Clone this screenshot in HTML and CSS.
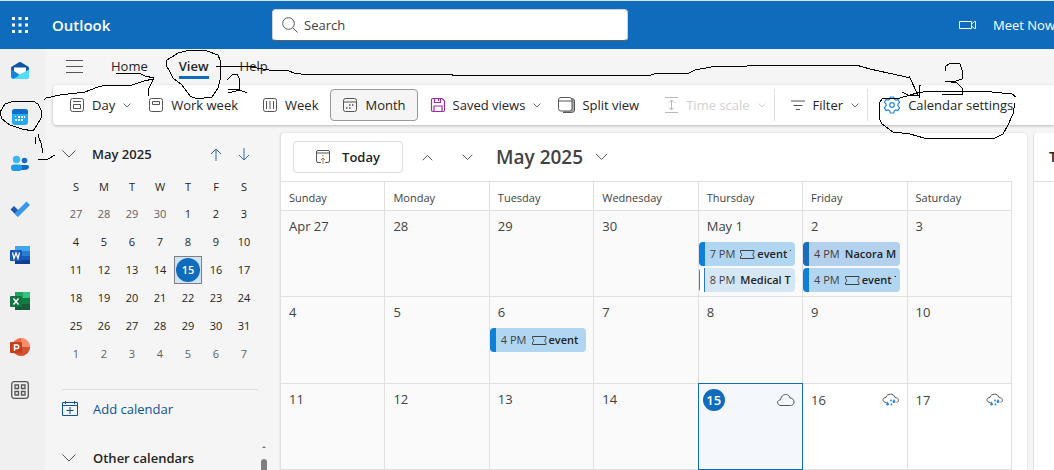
FILE: index.html
```html
<!DOCTYPE html>
<html lang="en">
<head>
<meta charset="utf-8">
<title>Outlook Calendar</title>
<link rel="stylesheet" href="styles.css">
</head>
<body>
<svg class="sprite" aria-hidden="true">
  <symbol id="chev" viewBox="0 0 8 5"><path vector-effect="non-scaling-stroke" d="M.5.5 4 4 7.500.5"/></symbol>
  <symbol id="chev-up" viewBox="0 0 8 5"><path vector-effect="non-scaling-stroke" d="M.5 4.500 4 1 7.500 4.500"/></symbol>
  <symbol id="ticket" viewBox="0 0 15 11"><path d="M.5 1.500h13.500v2c-1.500.5-1.500 3.500 0 4v2H.5v-2c1.500-.5 1.500-3.500 0-4z"/></symbol>
  <symbol id="rain" viewBox="0 0 18 14"><path d="M4.500 9.500C0 9.500 0 4.500 4 4.500 5 0 12 0 13 4.500c4 0 4.500 4 1.500 5"/><path class="drop" d="M5.500 8.500 4 11a1.500 1.500 0 1 0 3 0zM12 6l-1.500 2.500a1.500 1.500 0 1 0 3 0zM9 6 8 7.500a1 1 0 1 0 2 0zM9.500 10l-1 1.500a1 1 0 1 0 2 0z"/></symbol>
</svg>

<header class="topbar">
  <button class="waffle" aria-label="App launcher">
    <svg width="16" height="16" viewBox="0 0 16 16" fill="#fff"><path d="M0 0h3v3H0zM6.500 0h3v3h-3zM13 0h3v3h-3zM0 6.500h3v3H0zM6.500 6.500h3v3h-3zM13 6.500h3v3h-3zM0 13h3v3H0zM6.500 13h3v3h-3zM13 13h3v3h-3z"/></svg>
  </button>
  <span class="brand">Outlook</span>
  <label class="search">
    <svg class="line" width="16" height="16" viewBox="0 0 16 16"><circle cx="6.500" cy="6.500" r="5.800"/><path d="m10.700 10.700 4.800 4.800"/></svg>
    <input type="text" placeholder="Search" aria-label="Search">
  </label>
  <button class="meet">
    <svg width="18" height="10" viewBox="0 0 18 10" fill="none" stroke="#fff"><path d="M.5 1.500h12v7H.5zM12.500 4l3-2.500h1v7h-1l-3-2.500z"/></svg>
    Meet Now
  </button>
</header>

<div class="shell">
  <nav class="rail" aria-label="Apps">
    <div class="rail-apps">
      <a href="#mail" aria-label="Mail"><svg width="20" height="20" viewBox="0 0 20 20"><path fill="#0f56a8" d="M1 7q0-1 1-1.600L9 1.300q1-.6 2 0l7 4.100q1 .6 1 1.600v6H1z"/><path fill="#fff" d="M4 6.500h12V12l-6 3-6-3z"/><path fill="#2bb4f2" d="m1 8.500 8 4.800q1 .6 2 0l8-4.800V15a3 3 0 0 1-3 3H4a3 3 0 0 1-3-3z"/><path fill="#55dcfb" d="M19 8.500 7 15.700Q5 17 3 17.800l1 .2h12a3 3 0 0 0 3-3z"/><path fill="#1583da" d="m1 8.500 7.500 4.500-1 2.500L3 17.800A3 3 0 0 1 1 15z"/></svg></a>
      <a href="#calendar" aria-label="Calendar"><svg width="20" height="20" viewBox="0 0 20 20"><rect x="2" y="2" width="16" height="16" rx="3" fill="#22aaf5"/><path fill="#0d6ccb" d="M2 7V5a3 3 0 0 1 3-3h10a3 3 0 0 1 3 3v2z"/><path fill="#fff" d="M8 9h2v2H8zM11 9h2v2h-2zM14 9h1v2h-1zM5 12h2v2H5zM8 12h2v2H8zM11 12h2v2h-2zM5 9h1v1H5z"/></svg></a>
      <a href="#people" aria-label="People"><svg width="20" height="20" viewBox="0 0 20 20"><circle cx="14.500" cy="7.500" r="2.800" fill="#0c6ccc"/><path fill="#0c6ccc" d="M11 12h6q2 0 2 2c0 2-2 3-5 3h-3z"/><circle cx="6.500" cy="6.500" r="3.700" fill="#35b8f4"/><rect x="1" y="11.500" width="11" height="6.500" rx="3" fill="#1c9bea"/></svg></a>
      <a href="#todo" aria-label="To Do"><svg width="20" height="20" viewBox="0 0 20 20"><path fill="#1b57b5" d="m.5 10.500 3.500-3.500 7 7-3.500 3.500z"/><path fill="#3a98ec" d="M4.500 14.500 16.500 2.500 20 6 8 18z"/></svg></a>
      <a href="#word" aria-label="Word"><svg width="20" height="20" viewBox="0 0 20 20"><path fill="#41a5ee" d="M5 1h15v5H5z"/><path fill="#2b7cd3" d="M5 6h15v5H5z"/><path fill="#185abd" d="M5 11h15v4H5z"/><path fill="#103f91" d="M5 15h15v4H5z"/><rect y="5" width="12" height="11" rx="1" fill="#1856b5"/><path fill="none" stroke="#fff" stroke-width="1.300" d="m2.500 7.500 1.500 6 2-5.500 2 5.500 1.500-6"/></svg></a>
      <a href="#excel" aria-label="Excel"><svg width="20" height="20" viewBox="0 0 20 20"><path fill="#21a366" d="M5 1h8v6H5z"/><path fill="#33c481" d="M13 1h7v6h-7z"/><path fill="#107c41" d="M5 7h15v6H5z"/><path fill="#185c37" d="M5 13h15v6H5z"/><rect y="5" width="12" height="11" rx="1" fill="#107540"/><path fill="none" stroke="#fff" stroke-width="1.500" d="m3.500 7.500 5 6m0-6-5 6"/></svg></a>
      <a href="#powerpoint" aria-label="PowerPoint"><svg width="20" height="20" viewBox="0 0 20 20"><circle cx="11" cy="10" r="9" fill="#ed6c47"/><path fill="#ff8f6b" d="M11 1a9 9 0 0 1 9 9h-9z"/><path fill="#d35230" d="M2 10h18a9 9 0 0 1-18 0z"/><rect y="5" width="12" height="11" rx="1" fill="#c43e1c"/><path fill="none" stroke="#fff" stroke-width="1.500" d="M4.500 14V8H7a1.500 1.500 0 0 1 0 3.500H4.500"/></svg></a>
    </div>
    <a class="rail-more" href="#apps" aria-label="More apps"><svg width="20" height="20" viewBox="0 0 20 20" fill="none" stroke="#555" stroke-width="1.300"><rect x="1.700" y="1.700" width="16.600" height="16.600" rx="2.500"/><path d="M5 5h3.500v3.500H5zM11.500 5H15v3.500h-3.500zM5 11.500h3.500V15H5zM11.500 11.500H15V15h-3.500z"/></svg></a>
  </nav>

  <div class="content">
    <div class="tabs">
      <button class="burger" aria-label="Navigation pane"><svg class="line" width="17" height="13" viewBox="0 0 17 13"><path d="M0 .5h17M0 6.500h17M0 12.500h17"/></svg></button>
      <button class="tab tab-home">Home</button>
      <button class="tab tab-view active">View</button>
      <button class="tab">Help</button>
    </div>

    <div class="toolbar">
      <button class="tool"><svg class="line" width="16" height="16" viewBox="0 0 16 16"><rect x="1.500" y="1.500" width="13" height="13" rx="2"/><path d="M4 4.500h8M4.500 7.500h7v4h-7z"/></svg>Day<svg class="chev"><use href="#chev"/></svg></button>
      <button class="tool"><svg class="line" width="16" height="16" viewBox="0 0 16 16"><rect x="1.500" y="1.500" width="13" height="13" rx="2"/><path d="M4.500 4.500h7v3h-7z"/></svg>Work week</button>
      <button class="tool"><svg class="line" width="16" height="16" viewBox="0 0 16 16"><rect x="1.500" y="1.500" width="13" height="13" rx="2"/><path d="M4.500 4v8M8 4v8M11.500 4v8"/></svg>Week</button>
      <button class="tool selected"><svg class="line" width="16" height="16" viewBox="0 0 16 16"><rect x="1.500" y="1.500" width="13" height="13" rx="2"/><path d="M1.500 5h13"/><path stroke-width="1.500" stroke-dasharray="1.500 1.500" d="M7 8h5M4 11h6"/></svg>Month</button>
      <button class="tool"><svg width="16" height="16" viewBox="0 0 16 16" fill="none" stroke="#9a2fa5" stroke-width="1.200"><path d="M1.500 3A1.500 1.500 0 0 1 3 1.500h9L14.500 4v9a1.500 1.500 0 0 1-1.500 1.500H3A1.500 1.500 0 0 1 1.500 13zM4.500 1.500v4h6v-4M4 14.500V9h8v5.500M8.500 2v2"/></svg>Saved views<svg class="chev"><use href="#chev"/></svg></button>
      <button class="tool"><svg class="line" width="17" height="16" viewBox="0 0 17 16"><path fill="#aaa" d="M13.500 1.500q3 0 3 2.500v9q0 2.500-3 2.500H5"/><rect x=".5" y=".5" width="13.500" height="13.500" rx="2.500" fill="#fff"/><path d="M.5 4h13.500"/></svg>Split view</button>
      <button class="tool" disabled><svg width="16" height="16" viewBox="0 0 16 16" fill="none" stroke="#b8b8b8"><path d="M2 .5h13M2 15.500h13M8.500 3v10M6 5.500 8.500 3 11 5.500M6 10.500 8.500 13l2.500-2.500"/></svg>Time scale<svg class="chev"><use href="#chev"/></svg></button>
      <span class="divider"></span>
      <button class="tool"><svg class="line" width="16" height="16" viewBox="0 0 16 16"><path d="M1 4h14M3.500 8.500h9M6 12.500h4"/></svg>Filter<svg class="chev"><use href="#chev"/></svg></button>
      <span class="divider"></span>
      <button class="tool"><svg width="18" height="18" viewBox="0 0 18 18" fill="none" stroke="#2b88d8" stroke-width="1.200"><path d="M7.300 1h3.400l.6 2.300 1.300.8 2.300-.7 1.700 3-1.700 1.700v1.800l1.700 1.700-1.700 3-2.300-.7-1.300.8-.6 2.300H7.300l-.6-2.300-1.300-.8-2.300.7-1.700-3 1.700-1.700V8.100L1.400 6.400l1.700-3 2.300.7 1.300-.8z" stroke-linejoin="round"/><circle cx="9" cy="9" r="2.300"/></svg>Calendar settings</button>
    </div>

    <div class="workspace">
      <aside class="side">
        <div class="side-head">
          <svg class="line" width="14" height="8" viewBox="0 0 14 8"><path d="m.5.5 6.500 6.500 6.500-6.500"/></svg>
          <strong>May 2025</strong>
          <button class="arrow" aria-label="Previous month"><svg width="12" height="13" viewBox="0 0 12 13"><path d="M6 13V1M1 6l5-5 5 5"/></svg></button>
          <button class="arrow" aria-label="Next month"><svg width="12" height="13" viewBox="0 0 12 13"><path d="M6 0v12M1 7l5 5 5-5"/></svg></button>
        </div>
        <table class="mini">
          <thead><tr><th>S</th><th>M</th><th>T</th><th>W</th><th>T</th><th>F</th><th>S</th></tr></thead>
          <tbody>
            <tr><td class="out">27</td><td class="out">28</td><td class="out">29</td><td class="out">30</td><td>1</td><td>2</td><td>3</td></tr>
            <tr><td>4</td><td>5</td><td>6</td><td>7</td><td>8</td><td>9</td><td>10</td></tr>
            <tr><td>11</td><td>12</td><td>13</td><td>14</td><td class="picked"><span>15</span></td><td>16</td><td>17</td></tr>
            <tr><td>18</td><td>19</td><td>20</td><td>21</td><td>22</td><td>23</td><td>24</td></tr>
            <tr><td>25</td><td>26</td><td>27</td><td>28</td><td>29</td><td>30</td><td>31</td></tr>
            <tr><td class="out">1</td><td class="out">2</td><td class="out">3</td><td class="out">4</td><td class="out">5</td><td class="out">6</td><td class="out">7</td></tr>
          </tbody>
        </table>
        <button class="add"><svg width="16" height="16" viewBox="0 0 16 16" fill="none" stroke="#0f5391"><path d="M.5 1.500h15v13H.5zM.5 4.500h15M3.500 0v3M12.500 0v3M8 6v7M4.500 9.500h7"/></svg>Add calendar</button>
        <div class="other">
          <svg class="line" width="14" height="8" viewBox="0 0 14 8"><path d="m.5.5 6.500 6.500 6.500-6.500"/></svg>
          <strong>Other calendars</strong>
          <span class="scroll"><svg width="4" height="2" viewBox="0 0 4 2"><path fill="#777" d="M0 2 2 0l2 2z"/></svg><i></i></span>
        </div>
      </aside>

      <main class="month">
        <div class="month-head">
          <button class="today"><svg width="14" height="14" viewBox="0 0 14 14" fill="none" stroke="#555"><path d="M5 12.500H2A1.500 1.500 0 0 1 .5 11V2A1.500 1.500 0 0 1 2 .5h10A1.500 1.500 0 0 1 13.500 2v9a1.500 1.500 0 0 1-1.500 1.500H9M.5 3h13"/><path stroke="#c47a2c" d="M7 14V8M5 10l2-2 2 2M7 5v1.500"/></svg>Today</button>
          <button class="step" aria-label="Previous"><svg class="line" width="11" height="7"><use href="#chev-up"/></svg></button>
          <button class="step" aria-label="Next"><svg class="line" width="11" height="7"><use href="#chev"/></svg></button>
          <button class="month-title">May 2025<svg class="line" width="13" height="8"><use href="#chev"/></svg></button>
        </div>
        <table class="grid">
          <thead><tr><th>Sunday</th><th>Monday</th><th>Tuesday</th><th>Wednesday</th><th>Thursday</th><th>Friday</th><th>Saturday</th></tr></thead>
          <tbody>
            <tr>
              <td>Apr 27</td><td>28</td><td>29</td><td>30</td>
              <td>May 1
                <a class="event" href="#e1"><span>7 PM</span><svg class="ticket"><use href="#ticket"/></svg><b>event T</b></a>
                <a class="event tentative" href="#e2"><span>8 PM</span><b>Medical T</b></a>
              </td>
              <td>2
                <a class="event navy" href="#e3"><span>4 PM</span><b>Nacora M</b></a>
                <a class="event" href="#e4"><span>4 PM</span><svg class="ticket"><use href="#ticket"/></svg><b>event T</b></a>
              </td>
              <td>3</td>
            </tr>
            <tr>
              <td>4</td><td>5</td>
              <td>6
                <a class="event" href="#e5"><span>4 PM</span><svg class="ticket"><use href="#ticket"/></svg><b>event</b></a>
              </td>
              <td>7</td><td>8</td><td>9</td><td>10</td>
            </tr>
            <tr>
              <td>11</td><td>12</td><td>13</td><td>14</td>
              <td class="now"><div class="date-row"><span class="badge">15</span><svg class="line" width="18" height="14" viewBox="0 0 18 14"><path d="M4 12.500c-4.500 0-4.500-5.500-.5-5.500C4.500 0 12 0 13 5c5 0 5.500 7.500.5 7.500z"/></svg></div></td>
              <td class="future"><div class="date-row">16<svg class="line" width="18" height="14"><use href="#rain"/></svg></div></td>
              <td class="future"><div class="date-row">17<svg class="line" width="18" height="14"><use href="#rain"/></svg></div></td>
            </tr>
          </tbody>
        </table>
      </main>

      <section class="agenda"><h2>Thu, May 15</h2></section>
    </div>
  </div>
</div>

<svg class="ink" width="1054" height="200" viewBox="0 0 1054 200" aria-hidden="true">
  <path d="M0 112 2 119 10 125 22 129 33 131 37 125 41 118 41 110 38 104 33 101 14 101 5 104 0 112"/>
  <path d="M35 137v7M38 134l1 4 2 5 2 10M38 159h10l7-4"/>
  <path d="M44 100 46 98 60 95 85 92 98 87 106 85H132L144 81 153 79M116 73h23l6 3 9 2-5 10-1 8"/>
  <path d="M178 53 190 50 207 51 218 55 220 60V80L218 88 212 97 197 99 190 96 182 85 173 78 170 72 166 65 167 60 172 57z"/>
  <path d="M227 80 232 75 237 74 239 78V89H228M228 92H232L240 90 247 93"/>
  <path d="M216 66H252L257 68 269 70 289 71 294 73 301 74H452V75H651L657 73H689L695 70 711 67 747 66V65H856L870 69 888 73 902 76 910 78 918 95M909 76l2 4M921 85l-2 1v12M902 92l6 3h12"/>
  <path d="M945 71V67L950 63 960 64 962 70V79L956 81H945L957 83 962 88V94H942"/>
  <path d="M1016 97 1012 94 992 92 960 91H930L917 93 900 98H883L880 102 879 118 882 124 893 132 910 134 924 138H995L1003 134 1008 125 1013 114 1015 103"/>
</svg>
</body>
</html>
```

FILE: styles.css
```css
* { box-sizing: border-box; }

body {
  margin: 0;
  height: 100vh;
  display: flex;
  flex-direction: column;
  overflow: hidden;
  background: #f5f5f5;
  color: #242424;
  font: 13px/20px "Open Sans", sans-serif;
}

button {
  font: inherit;
  color: inherit;
  background: none;
  border: 0;
  padding: 0;
  white-space: nowrap;
}

svg { flex: none; }
.sprite { position: absolute; width: 0; height: 0; }
.line { fill: none; stroke: #555; }
.chev { width: 8px; height: 5px; margin-left: 1px; fill: none; stroke: #777; }
strong, b { font-weight: 600; }

/* Top bar */
.topbar {
  flex: none;
  display: flex;
  align-items: center;
  height: 49px;
  border-top: 1px solid #d9e3e8;
  padding-left: 12px;
  background: #0f6cbd;
  color: #fff;
  overflow: hidden;
}
.waffle { display: flex; }
.brand { width: 220px; margin-left: 24px; font-size: 15px; font-weight: 600; }
.search {
  display: flex;
  align-items: center;
  gap: 6px;
  flex: 0 1 356px;
  height: 32px;
  padding: 0 9px;
  background: #fff;
  border: 1px solid #d1d1d1;
  border-bottom-color: #616161;
  border-radius: 4px;
}
.search input { flex: 1; min-width: 0; border: 0; outline: 0; padding: 0; font: inherit; }
.search input::placeholder { color: #424242; opacity: 1; }
.meet { display: flex; align-items: center; gap: 16px; flex: none; margin-left: auto; margin-right: -1px; }

/* App rail */
.shell { flex: 1; display: flex; min-height: 0; }
.rail { flex: none; width: 45px; padding: 12px 10px; background: #f0f0f0; }
.rail-apps { display: grid; gap: 26px; }
.rail a { display: flex; }
.rail-more { margin-top: 23px; }

.content { flex: 1; min-width: 0; display: flex; flex-direction: column; }

/* Ribbon */
.tabs { flex: none; display: flex; align-items: center; height: 36px; padding: 0 21px 2px; }
.burger { display: flex; width: 45px; }
.tab { border-bottom: 3px solid transparent; border-top: 3px solid transparent; }
.tab-home { margin-right: 31px; }
.tab-view { margin-right: 31px; }
.tab.active { border-bottom-color: #0f6cbd; font-weight: 600; }

.toolbar {
  flex: none;
  display: flex;
  align-items: center;
  height: 40px;
  margin-left: 8px;
  padding-left: 4px;
  background: #fff;
  border-radius: 4px 0 0 4px;
  box-shadow: 0 1px 3px rgba(0, 0, 0, .25);
  overflow: clip;
  overflow-clip-margin: 4px;
}
.tool {
  display: flex;
  align-items: center;
  gap: 7px;
  height: 32px;
  padding: 0 11px;
  border: 1px solid transparent;
  border-radius: 4px;
}
.tool:has(.chev) { padding-right: 4px; }
.tool.selected { border-color: #999; background: #f5f5f5; }
.tool:disabled { color: #d1d1d1; }
.tool:disabled .chev { stroke: #d1d1d1; }
.divider { width: 1px; height: 32px; margin: 0 3px; background: #e0e0e0; }

/* Side panel */
.workspace { flex: 1; display: flex; min-height: 0; }
.side { flex: none; width: 235px; padding-left: 17px; overflow: hidden; }
.side-head { display: flex; align-items: center; height: 20px; margin-top: 19px; }
.side-head strong { width: 118px; margin-left: 16px; }
.arrow { display: flex; width: 28px; }
.arrow path { fill: none; stroke: #2b6cb0; stroke-width: 1; }

.mini { border-collapse: collapse; table-layout: fixed; width: 196px; margin-top: 9px; font-size: 11px; }
.mini th, .mini td { height: 28px; padding: 0; text-align: center; font-weight: 400; line-height: 16px; }
.mini th { height: 27px; }
.mini .out { color: #616161; }
.mini .picked { background: #cfe4fa; box-shadow: inset 0 0 0 1px #808080; }
.mini .picked span {
  display: block;
  width: 24px;
  margin: 0 auto;
  line-height: 24px;
  border-radius: 50%;
  background: #0f6cbd;
  color: #fff;
  font-weight: 600;
}
.add {
  display: flex;
  align-items: center;
  gap: 15px;
  width: 196px;
  margin-top: 21px;
  padding-top: 9px;
  border-top: 1px solid #dcdcdc;
  color: #0f5391;
}
.other { display: flex; align-items: center; gap: 17px; height: 32px; margin-top: 23px; }
.scroll { display: grid; gap: 11px; justify-items: center; width: 6px; margin: 4px 13px 0 auto; align-self: start; }
.scroll i { width: 6px; height: 20px; border-radius: 3px; background: #808080; }

/* Month view */
.month {
  flex: 1;
  min-width: 0;
  display: grid;
  grid-template-rows: 48px 1fr;
  margin-top: 8px;
  padding-right: 15px;
  background: #fff;
  border-left: 1px solid #e0e0e0;
  border-radius: 4px 4px 0 0;
  box-shadow: 0 0 2px rgba(0, 0, 0, .16);
}
.month-head { display: flex; align-items: center; padding-left: 12px; }
.today {
  display: flex;
  align-items: center;
  justify-content: center;
  gap: 12px;
  width: 110px;
  height: 32px;
  border: 1px solid #dcdcdc;
  border-radius: 4px;
  font-weight: 600;
}
.step { display: grid; place-items: center; width: 40px; height: 32px; }
.today + .step { margin-left: 4px; }
.month-title { display: flex; align-items: center; gap: 12px; margin-left: 9px; font-size: 19px; font-weight: 600; color: #424242; }

.grid { width: 100%; height: 100%; table-layout: fixed; border-collapse: separate; border-spacing: 0; color: #424242; }
.grid th {
  height: 30px;
  padding: 3px 0 0 8px;
  border: solid #e0e0e0;
  border-width: 1px 1px 1px 0;
  text-align: left;
  font-size: 11px;
  font-weight: 400;
}
.grid td {
  height: 86px;
  padding: 5px 7px 0 8px;
  border: solid #e0e0e0;
  border-width: 0 1px 1px 0;
  background: #fafafa;
  vertical-align: top;
}
.grid .future { background: #fff; }
.grid .now {
  position: relative;
  padding-left: 4px;
  background: #f4f8fc;
  border-color: #0f6cbd;
  box-shadow: 0 -1px #0f6cbd, -1px 0 #0f6cbd, -1px -1px #0f6cbd;
}
.date-row { display: flex; align-items: center; justify-content: space-between; height: 22px; }
.badge {
  width: 22px;
  line-height: 22px;
  border-radius: 50%;
  background: #0f6cbd;
  color: #fff;
  text-align: center;
  font-weight: 600;
}
.event {
  display: flex;
  align-items: center;
  height: 24px;
  margin: 6px 0 0 -8px;
  padding-left: 5px;
  border-left: 6px solid #0f80d8;
  border-right: 4px solid #b1d6f2;
  border-radius: 4px;
  background: #b1d6f2;
  color: #242424;
  font-size: 11px;
  white-space: nowrap;
  overflow: hidden;
  text-decoration: none;
}
.event + .event { margin-top: 2px; }
.event span { margin-right: 5px; color: #424242; }
.event.navy { background: #b3d1ec; border-left-color: #1a6fbd; border-right-color: #b3d1ec; }
.event.tentative {
  border-color: transparent;
  background: linear-gradient(90deg, #2b7cc4 1px, #fff 1px 5px, #2b7cc4 5px 6px, #d5e6f5 6px) border-box;
}
.ticket { width: 15px; height: 11px; margin-right: 2px; fill: none; stroke: #424242; }
.drop { fill: #2b88d8; stroke: none; }

.agenda {
  flex: 0 0 21px;
  margin: 8px 0 0 6px;
  background: #fff;
  border-left: 1px solid #e0e0e0;
  border-radius: 4px 0 0 0;
  overflow: hidden;
}
.agenda h2 {
  height: 49px;
  margin: 0;
  padding-left: 15px;
  border-bottom: 1px solid #e0e0e0;
  font-size: 14px;
  line-height: 48px;
  font-weight: 600;
  white-space: nowrap;
}

/* Pen strokes drawn over the page */
.ink { position: absolute; left: 0; top: 0; fill: none; stroke: #000; pointer-events: none; shape-rendering: crispEdges; }
```
